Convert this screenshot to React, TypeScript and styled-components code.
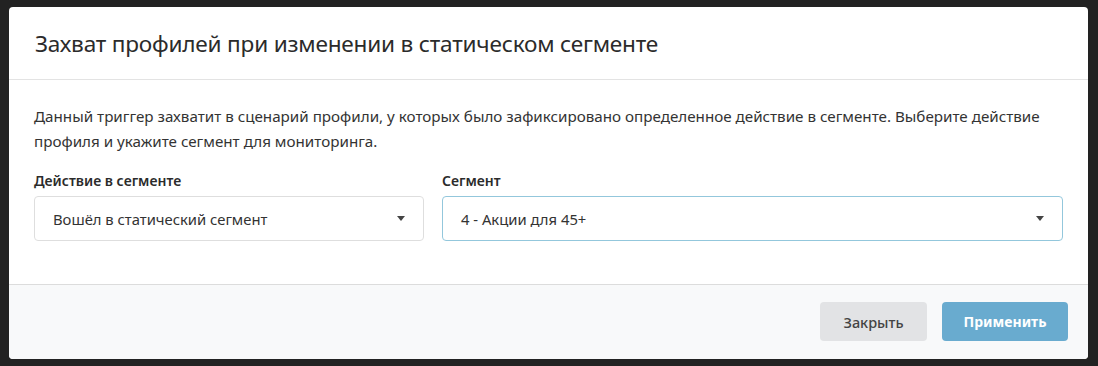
import React from "react";
import styled, { createGlobalStyle } from "styled-components";

const GlobalStyle = createGlobalStyle`
  html, body {
    margin: 0;
    padding: 0;
    background: #222222;
    height: 100%;
    overflow: hidden;
  }
  body {
    font-family: "Noto Sans", "Open Sans", sans-serif;
  }
`;

const Overlay = styled.div`
  padding: 7px 0 0 9px;
`;

const Modal = styled.div`
  width: 1079px;
  height: 352px;
  background: #ffffff;
  border-radius: 4px;
  overflow: hidden;
  display: flex;
  flex-direction: column;
`;

const Header = styled.div`
  height: 73px;
  box-sizing: border-box;
  border-bottom: 1px solid #e3e3e3;
  display: flex;
  align-items: center;
  padding: 0 26px;
`;

const Title = styled.h2`
  margin: 0;
  font-size: 22.6px;
  font-weight: 400;
  color: #2b2b2b;
  letter-spacing: -0.2px;
`;

const Body = styled.div`
  flex: 1;
  padding: 24px 25px 0 25px;
`;

const Description = styled.p`
  margin: 0;
  font-size: 15.2px;
  line-height: 25px;
  color: #333333;
`;

const Fields = styled.div`
  display: grid;
  grid-template-columns: 390px 1fr;
  column-gap: 18px;
  margin-top: 18px;
`;

const Field = styled.div`
  display: flex;
  flex-direction: column;
`;

const Label = styled.label`
  font-size: 14px;
  font-weight: 600;
  color: #2b2b2b;
  line-height: 18px;
  margin-bottom: 6px;
`;

const Select = styled.div<{ $focused?: boolean }>`
  height: 45px;
  box-sizing: border-box;
  border: 1px solid ${(p) => (p.$focused ? "#93c7dc" : "#dedede")};
  border-radius: 4px;
  display: flex;
  align-items: center;
  justify-content: space-between;
  padding: 0 18px 0 18px;
  font-size: 14.8px;
  color: #333333;
  background: #ffffff;
`;

const Caret = styled.span`
  width: 0;
  height: 0;
  border-left: 4.5px solid transparent;
  border-right: 4.5px solid transparent;
  border-top: 5px solid #444444;
`;

const Footer = styled.div`
  height: 75px;
  box-sizing: border-box;
  border-top: 1px solid #dcdcdc;
  background: #f8f9fa;
  display: flex;
  justify-content: flex-end;
  align-items: flex-start;
  gap: 15px;
  padding: 17px 20px 0 0;
`;

const Button = styled.button<{ $primary?: boolean }>`
  height: 39px;
  border: none;
  border-radius: 4px;
  font-family: inherit;
  font-size: ${(p) => (p.$primary ? "14px" : "14.5px")};
  font-weight: ${(p) => (p.$primary ? 700 : 500)};
  color: ${(p) => (p.$primary ? "#ffffff" : "#444444")};
  background: ${(p) => (p.$primary ? "#69abcf" : "#e2e3e5")};
  width: ${(p) => (p.$primary ? "126px" : "107px")};
  cursor: pointer;
`;

export default function App() {
  return (
    <>
      <GlobalStyle />
      <Overlay>
        <Modal>
          <Header>
            <Title>Захват профилей при изменении в статическом сегменте</Title>
          </Header>
          <Body>
            <Description>
              Данный триггер захватит в сценарий профили, у которых было зафиксировано определенное действие в сегменте. Выберите действие
              <br />
              профиля и укажите сегмент для мониторинга.
            </Description>
            <Fields>
              <Field>
                <Label>Действие в сегменте</Label>
                <Select>
                  Вошёл в статический сегмент
                  <Caret />
                </Select>
              </Field>
              <Field>
                <Label>Сегмент</Label>
                <Select $focused>
                  4 - Акции для 45+
                  <Caret />
                </Select>
              </Field>
            </Fields>
          </Body>
          <Footer>
            <Button>Закрыть</Button>
            <Button $primary>Применить</Button>
          </Footer>
        </Modal>
      </Overlay>
    </>
  );
}
